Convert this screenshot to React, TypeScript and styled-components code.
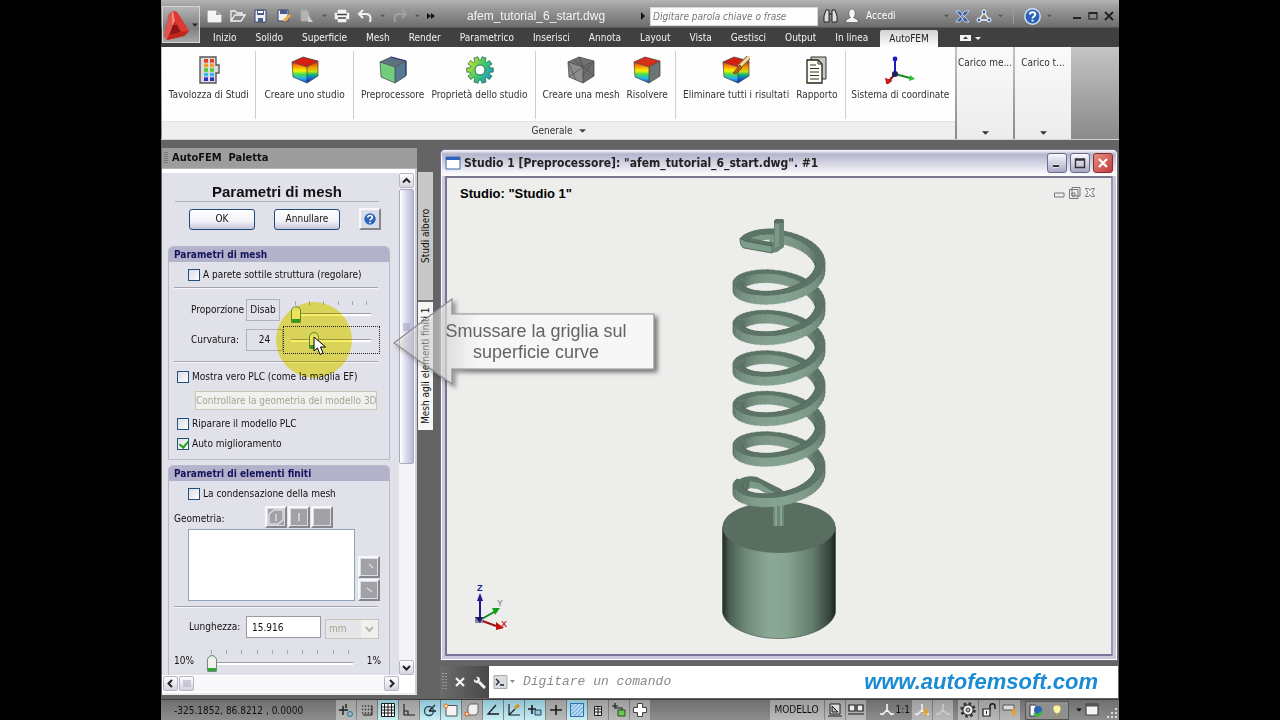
import React from "react";
import styled, { createGlobalStyle, css } from "styled-components";

const ui = `"DejaVu Sans Condensed", "DejaVu Sans", sans-serif`;
const arial = `"Liberation Sans", Arial, sans-serif`;

const Global = createGlobalStyle`
  * { box-sizing: border-box; }
  body { margin: 0; background: #000; font-family: ${ui}; font-size: 10px; line-height: 14px; color: #111; }
  button, input, select { font: inherit; color: inherit; margin: 0; padding: 0; }
  button { background: none; border: 0; }
  svg { display: block; flex: none; }
`;

const Stage = styled.div`
  min-height: 100vh;
  padding: 0 161px;
  overflow: hidden;
  display: flex;
  flex-direction: column;
`;

/* ---------- header ---------- */
const Header = styled.header`
  display: flex;
  height: 47px;
  background: linear-gradient(#b4b4b4, #9a9a9a 8px, #6e6e6e 27px, #404040 28px, #404040);
`;
const LogoButton = styled.button`
  width: 38px;
  height: 37px;
  margin: 6px 0 0 1px;
  display: flex;
  align-items: center;
  gap: 2px;
  border: 1px solid #d5d5d5;
  background: linear-gradient(#b5b5b5, #7f7f7f 60%, #a8a8a8);
`;
const HeaderMain = styled.div`
  flex: 1;
  min-width: 0;
`;
const TitleRow = styled.div`
  display: flex;
  align-items: center;
  height: 28px;
  padding: 4px 4px 0 6px;
`;
const QuickBar = styled.div`
  display: flex;
  align-items: center;
  width: 236px;
  gap: 7px;
  padding-left: 1px;
`;
const ToolButton = styled.button`
  display: flex;
  align-items: center;
`;
const DocName = styled.div`
  width: 173px;
  padding-left: 25px;
  font: 12px/16px ${arial};
  color: #f4f4f4;
  white-space: nowrap;
`;
const Search = styled.input`
  flex: 1;
  min-width: 0;
  height: 19px;
  margin: 0 5px 0 3px;
  padding: 0 2px;
  border: 1px solid #d8d8d8;
  background: #fdfdfd;
  font: italic 10px/17px ${ui};
  &::placeholder { color: #777; opacity: 1; }
`;
const Account = styled.div`
  display: flex;
  align-items: center;
  gap: 7px;
  width: 121px;
  color: #fff;
`;
const HeaderTools = styled.div`
  display: flex;
  align-items: center;
  gap: 6px;
`;
const VLine = styled.span`
  width: 1px;
  height: 16px;
  margin: 0 4px;
  background: #9a9a9a;
`;
const WindowTools = styled.div`
  display: flex;
  gap: 4px;
  margin-left: 19px;
`;
const Tabs = styled.nav`
  display: flex;
  height: 19px;
  padding-left: 4px;
`;
const Tab = styled.button<{ $active?: boolean }>`
  padding: 0 9px;
  margin-right: 1px;
  color: #f2f2f2;
  white-space: nowrap;
  ${(p) =>
    p.$active &&
    css`
      margin-top: 2px;
      margin-left: 2px;
      margin-right: 20px;
      border-radius: 2px 2px 0 0;
      background: linear-gradient(#d2d2d2, #fff);
      color: #222;
    `}
`;

/* ---------- ribbon ---------- */
const Ribbon = styled.section`
  display: flex;
  height: 93px;
  padding-left: 1px;
  background: linear-gradient(#c4c4c4, #8a8a8a);
  border-bottom: 1px solid #d5d5d5;
`;
const RibbonMain = styled.div`
  flex: 1;
  display: flex;
  flex-direction: column;
  background: #fefefe;
`;
const RibbonGroups = styled.div`
  flex: 1;
  display: flex;
  padding: 4px 0 2px;
`;
const RibbonGroup = styled.div<{ $grow: number }>`
  flex: ${(p) => p.$grow} 1 0;
  min-width: 0;
  display: flex;
  justify-content: space-evenly;
  align-items: flex-start;
  & + & { border-left: 1px solid #cfcfcf; }
`;
const RibbonButton = styled.button`
  display: flex;
  flex-direction: column;
  align-items: center;
  gap: 4px;
  padding-top: 5px;
  color: #333;
  white-space: nowrap;
`;
const RibbonTitle = styled.div`
  display: flex;
  justify-content: center;
  align-items: center;
  gap: 6px;
  height: 18px;
  border-top: 1px solid #e4e4e4;
  background: #efefef;
  color: #333;
`;
const SidePanel = styled.button`
  width: 56px;
  margin-left: 2px;
  padding: 9px 0 4px;
  display: flex;
  flex-direction: column;
  justify-content: space-between;
  align-items: center;
  background: linear-gradient(#fafafa, #ececec);
  color: #333;
  white-space: nowrap;
`;
const RibbonTail = styled.div`
  width: 48px;
`;

/* ---------- work area ---------- */
const Work = styled.main`
  position: relative;
  flex: 1;
  display: flex;
  min-height: 540px;
  padding: 8px 1px 0;
  background: #646464;
`;
const Palette = styled.aside`
  width: 255px;
  display: flex;
  flex-direction: column;
  margin-bottom: 4px;
  background: #fff;
  border-bottom: 2px solid #ececec;
  border-right: 2px solid #cdccdc;
`;
const PaletteTitle = styled.div`
  display: flex;
  gap: 4px;
  align-items: center;
  height: 21px;
  padding: 0 2px;
  background: #9d9d9d;
  border-bottom: 1px solid #b4b4b4;
  margin-right: -2px;
  font: bold 11px/14px ${ui};
  white-space: pre;
`;
const PaletteBody = styled.div`
  flex: 1;
  display: flex;
  min-height: 0;
  padding: 4px 1px 0 0;
`;
const Form = styled.form`
  flex: 1;
  min-width: 0;
  height: 502px;
  overflow: hidden;
  padding: 9px 9px 0 6px;
  background: #e1e1ea;
`;
const FormTitle = styled.h1`
  margin: 0 11px 6px 7px;
  border-bottom: 1px solid #b0b0b8;
  text-align: center;
  font: bold 15px/19px ${arial};
`;
const FormButtons = styled.div`
  display: flex;
  align-items: center;
  gap: 19px;
  margin: 0 0 16px 21px;
`;
const XpButton = styled.button`
  width: 66px;
  height: 21px;
  border: 1px solid #1d4c7c;
  border-radius: 3px;
  background: linear-gradient(#fff, #f1f1f8 60%, #c5c4da);
`;
const SquareButton = styled.button`
  display: flex;
  align-items: center;
  justify-content: center;
  width: 22px;
  height: 22px;
  border: 2px solid;
  border-color: #f8f8fb #85858d #85858d #f8f8fb;
  background: #dcdce4;
`;
const Fieldset = styled.section`
  margin-bottom: 5px;
  border: 1px solid #b9b8cc;
  border-radius: 5px 5px 0 0;
`;
const Legend = styled.h2`
  margin: 0;
  height: 15px;
  padding-left: 5px;
  background: #b4b1cb;
  border-radius: 4px 4px 0 0;
  font: bold 10px/15px ${ui};
  color: #14145c;
`;
const Rule = styled.hr`
  height: 2px;
  margin: 0 11px 0 5px;
  border: 0;
  border-top: 1px solid #a4a4ae;
  border-bottom: 1px solid #f6f6fa;
`;
const CheckRow = styled.label<{ $indent?: boolean }>`
  display: flex;
  align-items: center;
  gap: 3px;
  height: ${(p) => (p.$indent ? 25 : 20)}px;
  padding-left: ${(p) => (p.$indent ? 19 : 8)}px;
  white-space: nowrap;
`;
const Check = styled.input`
  appearance: none;
  width: 12px;
  height: 12px;
  border: 1px solid #24507c;
  background: linear-gradient(135deg, #dcdce4, #fff);
  &:checked::after {
    content: "";
    display: block;
    width: 4px;
    height: 7px;
    margin: 0 0 0 3px;
    border: solid #21a121;
    border-width: 0 2px 2px 0;
    transform: rotate(40deg);
  }
`;
const Sliders = styled.div`
  padding: 6px 0;
`;
const SliderRow = styled.div`
  display: flex;
  align-items: center;
  height: 30px;
  padding-left: 22px;
`;
const SliderLabel = styled.label`
  width: 55px;
  white-space: nowrap;
`;
const ValueBox = styled.output<{ $wide?: boolean }>`
  width: ${(p) => (p.$wide ? 37 : 34)}px;
  height: 22px;
  border: 1px solid #b2b1c2;
  text-align: center;
  line-height: 20px;
`;
const SliderCell = styled.div<{ $focus?: boolean }>`
  position: relative;
  width: 97px;
  height: 28px;
  margin-left: ${(p) => (p.$focus ? 0 : 3)}px;
  padding: 4px 8px 0 7px;
  border: 1px dotted ${(p) => (p.$focus ? "#222" : "transparent")};
`;
const Ticks = styled.div`
  display: flex;
  justify-content: space-between;
  height: 4px;
  padding: 0 4px;
  & > i { width: 1px; background: #a5a5ad; }
`;
const Range = styled.input`
  appearance: none;
  display: block;
  width: 100%;
  height: 18px;
  background: linear-gradient(transparent 8px, #9c9ca6 8px, #9c9ca6 9px, #fff 9px, #fff 11px, transparent 11px);
  &::-webkit-slider-thumb {
    appearance: none;
    width: 10px;
    height: 17px;
    border: 1px solid #6f8b74;
    border-radius: 5px 5px 1px 1px;
    background: linear-gradient(#cfe8cf, #f4f4f0 4px, #f0f0ec 12px, #2fa637 12px);
  }
`;
const Highlight = styled.span`
  position: absolute;
  left: -8px;
  top: -25px;
  width: 76px;
  height: 76px;
  border-radius: 50%;
  background: #f8f062;
  mix-blend-mode: multiply;
  pointer-events: none;
`;
const Pointer = styled.svg`
  position: absolute;
  left: 29px;
  top: 9px;
`;
const Checks = styled.div`
  padding: 4px 0 5px;
`;
const WideButton = styled.button`
  display: block;
  width: 182px;
  height: 19px;
  margin: 4px 0 4px 26px;
  border: 1px solid #c9c8b8;
  background: #f0f0ee;
  color: #a5a493;
  white-space: nowrap;
`;
const GeometryRow = styled.div`
  display: flex;
  align-items: flex-end;
  height: 22px;
  padding-left: 5px;
  & > span { width: 91px; line-height: 18px; }
  & > button + button { margin-left: 1px; }
`;
const ListRow = styled.div`
  display: flex;
  align-items: flex-end;
  gap: 3px;
  padding-left: 19px;
  margin: 1px 0 5px;
`;
const ListBox = styled.div`
  width: 167px;
  height: 72px;
  border: 1px solid #8ea4b8;
  background: #fff;
`;
const Stack = styled.div`
  display: flex;
  flex-direction: column;
  gap: 1px;
`;
const LengthRow = styled.div`
  display: flex;
  align-items: center;
  height: 38px;
  padding-left: 20px;
  & > label { width: 57px; }
`;
const TextInput = styled.input`
  width: 75px;
  height: 22px;
  padding: 0 5px;
  border: 1px solid #9a9aa6;
  background: #fff;
`;
const Unit = styled.div`
  position: relative;
  margin: 3px 0 0 4px;
`;
const UnitSelect = styled.select`
  appearance: none;
  display: block;
  width: 54px;
  height: 20px;
  padding: 0 3px;
  border: 1px solid #c6c5bb;
  background: #e6e6e8;
  color: #a5a493;
  opacity: 1;
`;
const UnitArrow = styled.svg`
  position: absolute;
  right: 1px;
  top: 1px;
`;
const PercentRow = styled.div`
  display: flex;
  align-items: center;
  height: 30px;
  padding: 0 8px 0 5px;
  & > label { width: 28px; }
  & > div { flex: 1; padding: 0 14px 0 5px; }
`;

const VScroll = styled.div`
  display: flex;
  flex-direction: column;
  align-items: center;
  width: 15px;
  height: 502px;
  background: #f4f4f8;
`;
const HScroll = styled.div`
  display: flex;
  height: 15px;
  margin: 1px 16px 2px 1px;
  gap: 1px;
  background: #f8f8fb;
  & > button:last-child { margin-left: auto; }
`;
const ScrollButton = styled.button`
  display: flex;
  align-items: center;
  justify-content: center;
  width: 15px;
  height: 15px;
  border: 1px solid #b5b5c6;
  border-radius: 2px;
  background: linear-gradient(#fff, #d4d4e2);
`;
const ScrollThumb = styled.div`
  display: flex;
  align-items: center;
  justify-content: center;
  width: 15px;
  height: 275px;
  margin: 1px 0 auto;
  border: 1px solid #a9a9c4;
  border-radius: 2px;
  background: linear-gradient(90deg, #fff, #d8d8ec 50%, #b9b9d6);
`;
const SideTabs = styled.div`
  display: flex;
  flex-direction: column;
  width: 16px;
  padding-top: 23px;
`;
const SideTab = styled.button<{ $active?: boolean }>`
  height: 130px;
  width: 16px;
  border: 1px solid #666;
  border-left: 0;
  background: ${(p) => (p.$active ? "#f6f6f6" : "#c8c8c8")};
  writing-mode: vertical-rl;
  transform: rotate(180deg);
  white-space: nowrap;
  line-height: 14px;
`;

/* ---------- document window ---------- */
const DocColumn = styled.div`
  flex: 1;
  min-width: 0;
  display: flex;
  flex-direction: column;
  margin-left: 7px;
  padding-top: 1px;
`;
const DocWindow = styled.section`
  flex: 1;
  display: flex;
  flex-direction: column;
  padding: 0 4px 4px;
  border: 1px solid #6e6c8c;
  border-radius: 5px 5px 0 0;
  background: #cbcadc;
  box-shadow: inset 0 0 0 1px #fff;
`;
const DocTitle = styled.div`
  display: flex;
  align-items: center;
  gap: 3px;
  height: 26px;
  margin: 0 -3px;
  padding: 0 3px;
  border-radius: 4px 4px 0 0;
  background: linear-gradient(#fff, #b4b4cc 4px, #cfcfdf 12px, #f2f2f8 22px, #fff);
  font: bold 12px/14px ${ui};
  color: #222;
  & > span { flex: 1; white-space: nowrap; }
`;
const CaptionButton = styled.button<{ $close?: boolean }>`
  display: flex;
  align-items: center;
  justify-content: center;
  width: 20px;
  height: 20px;
  border: 1px solid ${(p) => (p.$close ? "#8a2a2a" : "#6b6b8c")};
  border-radius: 3px;
  background: ${(p) => (p.$close ? "linear-gradient(135deg, #e58f84, #c23a3a)" : "linear-gradient(#fafaff, #a9a9c6)")};
`;
const Canvas = styled.div`
  position: relative;
  flex: 1;
  border: 2px solid #777;
  border-color: #77778a #9a9ab4 #77779a #77778a;
  background: #ededec;
`;
const StudioName = styled.div`
  padding: 8px 13px;
  font: bold 13px/16px ${arial};
  color: #000;
`;
const ViewTools = styled.svg`
  position: absolute;
  right: 15px;
  top: 8px;
`;
const Model = styled.svg`
  position: absolute;
  left: calc(50% - 64px);
  top: 32px;
`;
const Axes = styled.svg`
  position: absolute;
  left: 23px;
  bottom: 21px;
`;
const CommandBar = styled.div`
  display: flex;
  align-items: center;
  height: 32px;
  margin: 5px 0 1px;
  background: #fff;
`;
const CommandHandle = styled.div`
  display: flex;
  align-items: center;
  gap: 8px;
  width: 49px;
  height: 32px;
  padding-left: 2px;
  background: linear-gradient(90deg, #6c6c6c, #484848);
`;
const CommandInput = styled.input`
  flex: 1;
  min-width: 0;
  margin-left: 8px;
  border: 0;
  background: none;
  font: italic 13px/16px "Liberation Mono", monospace;
  &::placeholder { color: #8a8a8a; opacity: 1; }
`;
const SiteLink = styled.a`
  margin-right: 20px;
  font: italic bold 22px/28px ${arial};
  color: #1b8bd6;
  text-decoration: none;
`;

const Callout = styled.div`
  position: absolute;
  left: 229px;
  top: 155px;
  width: 274px;
  height: 98px;
`;
const CalloutText = styled.p`
  position: absolute;
  left: 53px;
  top: 26px;
  width: 186px;
  margin: 0;
  font: 18px/21px ${arial};
  color: #636363;
  text-align: center;
  white-space: nowrap;
`;

/* ---------- status bar ---------- */
const Status = styled.footer`
  display: flex;
  align-items: stretch;
  height: 21px;
  padding-left: 1px;
  border-top: 1px solid #3c3c3c;
  background: linear-gradient(#6f6f6f, #8d8d8d);
`;
const Coordinates = styled.div`
  width: 174px;
  padding-left: 12px;
  line-height: 22px;
  color: #111;
`;
const StatusButton = styled.button<{ $on?: boolean; $flat?: boolean; $gap?: boolean }>`
  display: flex;
  align-items: center;
  justify-content: center;
  width: 20px;
  margin-right: 1px;
  margin-left: ${(p) => (p.$gap ? 4 : 0)}px;
  background: ${(p) => (p.$flat ? "none" : p.$on ? "linear-gradient(#8ec3d2, #c9eef4)" : "linear-gradient(#9d9d9d, #b9b9b9)")};
`;
const Spacer = styled.div`
  flex: 1;
`;
const ModelButton = styled.button`
  width: 54px;
  margin-right: 1px;
  background: linear-gradient(#9d9d9d, #b9b9b9);
`;
const ScaleButton = styled.button`
  display: flex;
  align-items: center;
  gap: 1px;
  margin-left: 10px;
  padding: 0 2px;
`;
const Tray = styled.div`
  display: flex;
  margin: 1px 7px 0 4px;
  border: 1px solid #555;
  background: #8f8f8f;
`;

/* ---------- icons ---------- */
const Caret = ({ c = "#333", w = 7 }: { c?: string; w?: number }) => (
  <svg width={w} height="4" viewBox="0 0 8 4" aria-hidden="true"><path d="M0 0H8L4 4Z" fill={c} /></svg>
);

type Faces = { top: string; left: string; right: string };
const Cube = ({ top, left, right, children }: Faces & { children?: React.ReactNode }) => (
  <svg width="28" height="28" viewBox="0 0 28 28" aria-hidden="true">
    <defs>
      <linearGradient id="heat" x1="0" y1="0" x2="0" y2="1">
        <stop offset="0" stopColor="#f02a10" /><stop offset=".28" stopColor="#ffb400" />
        <stop offset=".42" stopColor="#f4f400" /><stop offset=".58" stopColor="#48dc48" />
        <stop offset=".78" stopColor="#22b4f0" /><stop offset="1" stopColor="#1840d0" />
      </linearGradient>
      <linearGradient id="heatR" x1="0" y1="0" x2="0" y2="1">
        <stop offset="0" stopColor="#d81808" /><stop offset=".3" stopColor="#f0a000" />
        <stop offset=".48" stopColor="#c8e010" /><stop offset=".62" stopColor="#10b870" />
        <stop offset=".8" stopColor="#1060e0" /><stop offset="1" stopColor="#1020a0" />
      </linearGradient>
    </defs>
    <path d="M1 6L12 1 27 5 16 11Z" fill={top} />
    <path d="M1 6L16 11V27L2 21Z" fill={left} />
    <path d="M16 11L27 5V20L16 27Z" fill={right} />
    <path d="M1 6L12 1 27 5V20L16 27 2 21ZM1 6L16 11 27 5M16 11V27" fill="none" stroke="#3c3c3c" strokeWidth=".7" strokeLinejoin="round" />
    {children}
  </svg>
);

const PaletteIcon = () => (
  <svg width="28" height="28" viewBox="0 0 28 28" aria-hidden="true">
    <path d="M5 1H21V9H24V17H21V27H5Z" fill="#dcdce0" stroke="#555" strokeWidth="1.4" />
    {["#e03a20", "#f0a020", "#58c838", "#38b8e8", "#3030c0"].map((c, i) => (
      <g key={c} fill={c}><rect x="9" y={3 + i * 4.6} width="4" height="3.6" /><rect x="15" y={3 + i * 4.6} width="4" height="3.6" /></g>
    ))}
  </svg>
);
const GearIcon = () => {
  const pts: string[] = [];
  for (let i = 0; i < 10; i++) {
    const a = (i * Math.PI) / 5;
    [[-0.22, 10], [-0.16, 13.4], [0.16, 13.4], [0.22, 10]].forEach(([d, r]) => {
      pts.push(`${(14 + r * Math.cos(a + d)).toFixed(1)} ${(14 + r * Math.sin(a + d)).toFixed(1)}`);
    });
  }
  return (
    <svg width="28" height="28" viewBox="0 0 28 28" aria-hidden="true">
      <defs><linearGradient id="gear" x1="0" y1=".2" x2="1" y2=".8"><stop offset="0" stopColor="#f0e020" /><stop offset=".45" stopColor="#48cc60" /><stop offset="1" stopColor="#1494d8" /></linearGradient></defs>
      <path d={`M${pts.join("L")}Z`} fill="url(#gear)" stroke="#2b7a55" strokeWidth=".9" strokeLinejoin="round" />
      <circle cx="14" cy="14" r="5" fill="#fff" stroke="#2b7a55" />
    </svg>
  );
};
const ReportIcon = () => (
  <svg width="28" height="28" viewBox="0 0 28 28" aria-hidden="true">
    <path d="M8 1H23V23H8Z" fill="#c8c8c0" stroke="#333" />
    <path d="M4 4H15L19 8V27H4Z" fill="#fffef0" stroke="#222" strokeWidth="1.3" />
    <path d="M15 4V8H19M7 9H13M7 12.500H16M7 16H16M7 19.500H16M7 23H16" fill="none" stroke="#333" />
  </svg>
);
const CoordIcon = () => (
  <svg width="30" height="28" viewBox="0 0 30 28" aria-hidden="true">
    <path d="M10 2V18" stroke="#2018c0" strokeWidth="2" /><circle cx="10" cy="3" r="2.400" fill="#2018c0" />
    <path d="M10 18L27 22.500" stroke="#208828" strokeWidth="2" /><path d="M25 19L30 23 24 25Z" fill="#28c038" />
    <path d="M10 18L3 26" stroke="#901818" strokeWidth="2" /><path d="M1 23L6 25 2 28Z" fill="#e02020" stroke="#c01818" strokeWidth="1.500" />
    <circle cx="10" cy="18" r="3" fill="#202060" />
  </svg>
);
const Lines = ({ d, w = 16, h = 14, c = "#f2f2f2", fill = "none", sw = 1.5, children }: { d: string; w?: number; h?: number; c?: string; fill?: string; sw?: number; children?: React.ReactNode }) => (
  <svg width={w} height={h} viewBox={`0 0 ${w} ${h}`} aria-hidden="true">
    <path d={d} fill={fill} stroke={c} strokeWidth={sw} />
    {children}
  </svg>
);
const HelpBall = ({ size = 15 }: { size?: number }) => (
  <svg width={size} height={size} viewBox="0 0 16 16" aria-hidden="true">
    <circle cx="8" cy="8" r="7.200" fill="#2c62b8" stroke="#cfe0f6" strokeWidth="1.400" />
    <path d="M5.500 6.200C5.500 3.200 10.600 3.200 10.600 6.200 10.600 8 8 8 8 9.800M8 11V12.800" fill="none" stroke="#fff" strokeWidth="1.900" />
  </svg>
);

/* ---------- spring model ---------- */
type Face = { pts: string; fill: string; depth: number };
const shade = (k: number) => {
  const base = [136, 166, 148];
  return `rgb(${base.map((v) => Math.round(v * k)).join(",")})`;
};
const buildSpring = (): Face[] => {
  const faces: Face[] = [];
  const cx = 64;
  const rOut = 46;
  const rIn = 37;
  const tilt = 0.48;
  const pitch = 40.5;
  const height = 9;
  const left = 77;
  const steps = 48;
  const at = (t: number, r: number, dy: number) => {
    const a = t * Math.PI * 2;
    return `${(cx - r * Math.cos(a)).toFixed(1)},${(left + pitch * t - r * tilt * Math.sin(a) + dy).toFixed(1)}`;
  };
  for (let i = Math.round(-0.8 * steps); i < 5.06 * steps; i++) {
    const t0 = i / steps;
    const t1 = (i + 1.15) / steps;
    const a = (t0 + 0.5 / steps) * Math.PI * 2;
    const front = -Math.sin(a);
    const depth = front * 40 - pitch * t0 * 0.5;
    const h = height / 2;
    const light = 0.46 + 0.52 * Math.sqrt(Math.abs(Math.sin(a)));
    faces.push({ pts: [at(t0, rIn, h), at(t1, rIn, h), at(t1, rIn, -h), at(t0, rIn, -h)].join(" "), fill: shade(front < 0 ? light * 0.95 : 0.5), depth });
    if (front > -0.12) {
      faces.push({ pts: [at(t0, rOut, h), at(t1, rOut, h), at(t1, rOut, -h), at(t0, rOut, -h)].join(" "), fill: shade(light), depth: depth + 0.01 });
    }
    faces.push({ pts: [at(t0, rOut, -h), at(t1, rOut, -h), at(t1, rIn, -h), at(t0, rIn, -h)].join(" "), fill: "#5b7465", depth: depth + 0.02 });
  }
  return faces.sort((p, q) => p.depth - q.depth);
};
const spring = buildSpring();

const SpringModel = () => (
  <Model width="128" height="432" viewBox="0 0 128 432" role="img" aria-label="Molla con cilindro">
    <defs>
      <linearGradient id="cyl"><stop offset="0" stopColor="#1f2a24" /><stop offset=".06" stopColor="#4a5e52" /><stop offset=".22" stopColor="#728c7c" /><stop offset=".42" stopColor="#8ba996" /><stop offset=".58" stopColor="#86a391" /><stop offset=".8" stopColor="#637b6c" /><stop offset=".95" stopColor="#34443a" /><stop offset="1" stopColor="#1b241f" /></linearGradient>
    </defs>
    <path d="M7.500 317V402C9 415 32 428.500 64 428.500S119 415 120.500 402V317Z" fill="url(#cyl)" stroke="#3c4d43" strokeWidth=".6" />
    <ellipse cx="64" cy="317" rx="56.500" ry="26" fill="#596e61" />
    <path d="M58 288H69V316H58Z" fill="#6d8777" /><path d="M60 288H62V316H60ZM65 288H67V316H65Z" fill="#87a392" />
    <path d="M18 278C20 269 32 264 42 267L66 279C70 282 70 288 68 293L56 293 56 286 45 280C38 276 34 277 30 283Z" fill="#5b7465" />
    <path d="M35 271L44 273 60 283C62 286 61 291 58 292L55 285 43 279 34 278Z" fill="#7d9a89" />
    {spring.map((f, i) => <polygon key={i} points={f.pts} fill={f.fill} stroke={f.fill} strokeWidth=".3" />)}
    <path d="M62 19C46 17 28 22 25 29L31 33 37 28C43 25 52 24 62 25Z" fill="#5b7465" />
    <path d="M35 29C40 25 50 24 60 25V29L40 31Z" fill="#7d9a89" />
    <path d="M27 27L35 28 61 33 57 37 30 32Z" fill="#5b7465" />
    <path d="M25 28L30 31 57 36V43L29 38C26 37 25 33 25 28Z" fill="#7f9d8b" stroke="#42554a" strokeWidth=".8" />
    <path d="M57 36L59 33V11L61 9H68L69 11V37L62 42 57 43Z" fill="#6b8575" />
    <path d="M59 11L61 9H68L69 11V13H59Z" fill="#587062" /><path d="M60 14H64V36L60 38Z" fill="#7d9989" />
  </Model>
);

/* ---------- data ---------- */
const tabs = ["Inizio", "Solido", "Superficie", "Mesh", "Render", "Parametrico", "Inserisci", "Annota", "Layout", "Vista", "Gestisci", "Output", "In linea", "AutoFEM"];

const brush = (
  <>
    <path d="M27 1L17 11" stroke="#8a6a30" strokeWidth="5" /><path d="M27 1L17 11" stroke="#f0dca0" strokeWidth="3" />
    <path d="M18 9L20 12 14 18 11 17Z" fill="#b86018" stroke="#6a3008" strokeWidth=".7" />
  </>
);
const meshLines = <path d="M2 21L16 11M1 6L9 24M16 11L27 20M16 19L27 5M7 4L16 11M12 1L16 11" stroke="#4a4a4a" strokeWidth=".7" />;
const groups: { grow: number; items: [string, React.ReactNode][] }[] = [
  { grow: 94, items: [["Tavolozza di Studi", <PaletteIcon />]] },
  { grow: 97, items: [["Creare uno studio", <Cube top="#d42010" left="url(#heat)" right="url(#heatR)" />]] },
  { grow: 182, items: [["Preprocessore", <Cube top="#5d7280" left="#74cc80" right="#567890"><path d="M12 1L27 5V19" fill="none" stroke="#20308c" /></Cube>], ["Proprietà dello studio", <GearIcon />]] },
  { grow: 140, items: [["Creare una mesh", <Cube top="#707070" left="#8c8c8c" right="#6c6c6c">{meshLines}</Cube>], ["Risolvere", <Cube top="#d83018" left="url(#heat)" right="#6c7478" />]] },
  { grow: 170, items: [["Eliminare tutti i risultati", <Cube top="#d42010" left="url(#heat)" right="url(#heatR)">{brush}</Cube>], ["Rapporto", <ReportIcon />]] },
  { grow: 110, items: [["Sistema di coordinate", <CoordIcon />]] },
];

const k = "#1c1c1c";
const statusIcons: [string, boolean, React.ReactNode][] = [
  ["Deduci vincoli", false, <Lines c={k} sw={1.4} d="M1 7H10M5 3V12M8 1V5"><circle cx="12" cy="11" r="2.500" fill="none" stroke="#1878a8" /></Lines>],
  ["Snap", false, <Lines c="#333" sw={1.4} d="M3 3H13M3 6.500H13M3 10H13" ><path d="M5 2V12M8 2V12M11 2V12" stroke="#aaa" strokeWidth="1.600" /><path d="M13 3V12M4 12H13" stroke={k} /></Lines>],
  ["Griglia", true, <Lines c={k} sw={1} fill="#fff" d="M1.500.500H14.500V13.500H1.500ZM4.500.500V13.500M8 .500V13.500M11.500.500V13.500M1.500 4H14.500M1.500 7H14.500M1.500 10H14.500" />],
  ["Orto", false, <Lines c={k} d="M3 1V12H14M3 8H7V12" sw={1.1} />],
  ["Polare", true, <Lines c={k} d="M7 8L13 2M7 8H14" sw={1.3}><circle cx="7" cy="8" r="4.500" fill="none" stroke="#245" strokeWidth="1.300" /></Lines>],
  ["Snap oggetto", true, <Lines c="#555" fill="#f4f4f4" d="M3 2.500H14V13H3Z" sw={1}><circle cx="3" cy="3" r="2" fill="#ffe0b0" stroke="#e07020" /></Lines>],
  ["Snap 3D", false, <Lines c="#666" fill="#f0f0f0" d="M4 4L6 1H14V9L12 12H4Z" sw={1}><circle cx="3" cy="11" r="2" fill="#ffe0b0" stroke="#d05020" /></Lines>],
  ["Puntamento", true, <Lines c={k} d="M11 2L3 11H14" sw={1.3} />],
  ["UCS dinamico", true, <Lines c={k} d="M3 1V12H14M3 12L9 6" sw={1.2}><path d="M9 5L13 2" stroke="#d89020" strokeWidth="3" /></Lines>],
  ["Input dinamico", true, <Lines c={k} d="M1 6H9M5 2V11" sw={1.6}><path d="M8 7H14V12H8Z" fill="#9cc" stroke="#246" /></Lines>],
  ["Spessore", false, <Lines c={k} d="M2 7H14M8 2V12" sw={1.6} />],
  ["Trasparenza", true, <Lines c="#2a6ca8" fill="#bfe0f8" d="M1.500.500H14.500V13.500H1.500Z" sw={1}><path d="M2 4L5 1M2 8L9 1M2 12L13 1M5 13L14 4M9 13L14 8" stroke="#7ab0dc" strokeWidth="1.200" /></Lines>],
  ["Proprietà", false, <Lines c={k} fill="#eee" d="M4.500 3.500H11.500V12.500H4.500ZM4.500 6H11.500M4.500 9H11.500M8 3V12" sw={1} />],
  ["Ciclo selezione", false, <Lines c={k} d="M1 3H7M4 0V6M5 5H11V8" sw={1.2}><path d="M7 7H14V13H7Z" fill="#6cc850" stroke="#285018" /></Lines>],
  ["Monitor", false, <Lines c="#444" fill="#fff" d="M5.500.500H10.500V4.500H14.500V9.500H10.500V13.500H5.500V9.500H1.500V4.500H5.500Z" sw={1} />],
];
const bolt = <path d="M12 5L10 9H13L11 13" fill="none" stroke="#e8a020" strokeWidth="1.800" />;
const person = "M8 1V7M8 7L3 12M8 7L13 12M5 11H1M11 11H15";

const quick: [string, React.ReactNode][] = [
  ["Nuovo", <Lines fill="#f4f4f4" d="M1 2H9L14 6V13H1Z" sw={0.8}><path d="M9 2V6H14" fill="#999" /></Lines>],
  ["Apri", <Lines d="M1 12V2H5L7 4H12V6M1 12L5 6H15L11 12Z" sw={1.3} />],
  ["Salva", <Lines fill="#f0f0f0" c="#34466c" d="M2 1H13V13H2Z" sw={1}><path d="M4 1H11V6H4ZM5 9H10V13H5Z" fill="#455c90" /><path d="M5 2H10V4H5Z" fill="#fff" /></Lines>],
  ["Salva con nome", <Lines fill="#f0f0f0" c="#34466c" d="M2 1H12V12H2Z" sw={1}><path d="M4 1H11V5H4Z" fill="#455c90" /><path d="M14 6L8 12" stroke="#e8b040" strokeWidth="3" /></Lines>],
  ["Proprietà foglio", <Lines fill="#b4b4b4" c="#a4a4a4" d="M2 1H8L10 4V12H2Z" sw={1}><path d="M9 6L14 13H9Z" fill="#d0d0d0" /></Lines>],
];

const CheckLine = ({ label, indent, checked }: { label: string; indent?: boolean; checked?: boolean }) => (
  <CheckRow $indent={indent}><Check type="checkbox" defaultChecked={checked} />{label}</CheckRow>
);
const TickMarks = ({ n }: { n: number }) => <Ticks>{Array.from({ length: n }, (_, i) => <i key={i} />)}</Ticks>;
const grey = (d?: string) => <svg width="16" height="16" viewBox="0 0 16 16" aria-hidden="true"><path d="M0 0H16V16H0Z" fill="#a2a2a6" />{d && <path d={d} fill="none" stroke="#dcdce0" strokeWidth="1.500" />}</svg>;
const chevron = (d: string) => <svg width="9" height="9" viewBox="0 0 9 9" aria-hidden="true"><path d={d} fill="none" stroke="#222" strokeWidth="2" /></svg>;

export default function App() {
  return (
    <>
      <Global />
      <Stage>
        <Header>
          <LogoButton aria-label="Menu applicazione">
            <svg width="27" height="32" viewBox="0 0 27 32" aria-hidden="true">
              <path d="M6 5L10 2 14 3 26 22 21 27 4 31 1 27Z" fill="#cf2a24" />
              <path d="M6 5L10 2 11 14 4 31 1 27Z" fill="#e0564c" /><path d="M10 2L14 3 26 22 21 27 13 14Z" fill="#dc3a32" />
              <path d="M10 16L14 16 18 24 6 27Z" fill="#8e1512" />
              <path d="M4 31L6 26 17 23 26 22 21 27Z" fill="#c22520" /><path d="M9 3L10 2 12 12 9 16Z" fill="#f28a80" />
            </svg>
            <Caret c="#222" w={6} />
          </LogoButton>
          <HeaderMain>
            <TitleRow>
              <QuickBar>
                {quick.map(([name, icon]) => <ToolButton key={name} aria-label={name}>{icon}</ToolButton>)}
                <Caret c="#555" w={5} />
                <ToolButton aria-label="Stampa"><Lines fill="#f4f4f4" d="M4 1H12V4H15V10H12V13H4V10H1V4H4Z" sw={0.6}><path d="M3 5.500H13M4 9H12" stroke="#444" strokeWidth="1.500" /></Lines></ToolButton>
                <ToolButton aria-label="Annulla"><Lines d="M6 1L2 5L6 9M2 5H9C14 5 14 9 13 13" sw={2} /></ToolButton>
                <Caret c="#555" w={5} />
                <ToolButton aria-label="Ripeti"><Lines c="#a2a2a2" d="M10 1L14 5L10 9M14 5H7C2 5 2 9 3 13" sw={2} /></ToolButton>
                <Caret c="#555" w={5} />
                <ToolButton aria-label="Altro"><Lines w={8} h={6} c="none" fill="#111" d="M0 0L4 3L0 6ZM4 0L8 3L4 6Z" /></ToolButton>
              </QuickBar>
              <DocName>afem_tutorial_6_start.dwg</DocName>
              <Lines w={32} h={8} c="none" fill="#111" d="M26 0L30 4L26 8Z" />
              <Search aria-label="Cerca" placeholder="Digitare parola chiave o frase" />
              <Account>
                <ToolButton aria-label="Cerca ora"><Lines fill="#ddd" c="#222" d="M3 1H6V13H1V7ZM9 1H12L14 7V13H9ZM6 5H9" w={15} sw={1} /></ToolButton>
                <ToolButton aria-label="Utente"><svg width="14" height="14" viewBox="0 0 14 14" aria-hidden="true"><path d="M7 0C11 0 11 7 8.500 8.500L13 11V13.500H1V11L5.500 8.500C3 7 3 0 7 0Z" fill="#f4f4f4" stroke="#444" strokeWidth=".6" /></svg></ToolButton>
                Accedi
              </Account>
              <HeaderTools>
                <Caret c="#555" w={5} />
                <ToolButton aria-label="Exchange"><svg width="15" height="13" viewBox="0 0 15 13" aria-hidden="true"><path d="M1 1H5L14 12H10ZM14 1H10L1 12H5Z" fill="#2c58a8" stroke="#dde8f8" strokeWidth=".8" /></svg></ToolButton>
                <ToolButton aria-label="Rete"><Lines d="M8 3L3 11H13Z" sw={1.4}><g fill="#2c62b8" stroke="#fff"><circle cx="8" cy="3" r="2" /><circle cx="3" cy="11" r="2" /><circle cx="13" cy="11" r="2" /></g></Lines></ToolButton>
                <Caret c="#555" w={5} />
                <VLine />
                <ToolButton aria-label="Guida"><HelpBall size={17} /></ToolButton>
                <Caret c="#555" w={5} />
              </HeaderTools>
              <WindowTools>
                <ToolButton aria-label="Riduci"><Lines w={12} h={12} c="#222" d="M2 8H10" sw={2} /></ToolButton>
                <ToolButton aria-label="Ingrandisci"><Lines w={12} h={12} c="#222" d="M2 2.500H10V9H2ZM2 3.500H10" sw={1.2} /></ToolButton>
                <ToolButton aria-label="Chiudi"><Lines w={12} h={12} c="#222" d="M2 2L10 10M10 2L2 10" sw={2} /></ToolButton>
              </WindowTools>
            </TitleRow>
            <Tabs>
              {tabs.map((t) => <Tab key={t} $active={t === "AutoFEM"}>{t}</Tab>)}
              <ToolButton aria-label="Riduci barra"><Lines w={24} h={10} c="none" fill="#f4f4f4" d="M2 2H13V8H2Z"><path d="M5 6L7.500 3.500L10 6Z" fill="#333" /><path d="M17 4H23L20 7Z" fill="#f4f4f4" /></Lines></ToolButton>
            </Tabs>
          </HeaderMain>
        </Header>

        <Ribbon>
          <RibbonMain>
            <RibbonGroups>
              {groups.map((g) => (
                <RibbonGroup key={g.grow} $grow={g.grow}>
                  {g.items.map(([label, icon]) => <RibbonButton key={label}>{icon}{label}</RibbonButton>)}
                </RibbonGroup>
              ))}
            </RibbonGroups>
            <RibbonTitle>Generale <Caret c="#444" /></RibbonTitle>
          </RibbonMain>
          <SidePanel>Carico me...<Caret /></SidePanel>
          <SidePanel>Carico t...<Caret /></SidePanel>
          <RibbonTail />
        </Ribbon>

        <Work>
          <Palette>
            <PaletteTitle>
              <svg width="4" height="12" viewBox="0 0 4 12" aria-hidden="true"><path d="M1 0V12M3 0V12" stroke="#555" strokeDasharray="1 1" /></svg>
              {"AutoFEM  Paletta"}
            </PaletteTitle>
            <PaletteBody>
              <Form onSubmit={(e) => e.preventDefault()}>
                <FormTitle>Parametri di mesh</FormTitle>
                <FormButtons>
                  <XpButton>OK</XpButton>
                  <XpButton>Annullare</XpButton>
                  <SquareButton aria-label="Guida"><HelpBall size={14} /></SquareButton>
                </FormButtons>
                <Fieldset>
                  <Legend>Parametri di mesh</Legend>
                  <CheckLine indent label="A parete sottile struttura (regolare)" />
                  <Rule />
                  <Sliders>
                    <SliderRow>
                      <SliderLabel htmlFor="prop">Proporzione</SliderLabel>
                      <ValueBox>Disab</ValueBox>
                      <SliderCell>
                        <TickMarks n={6} />
                        <Range id="prop" type="range" min="0" max="10" defaultValue="0" />
                      </SliderCell>
                    </SliderRow>
                    <SliderRow>
                      <SliderLabel htmlFor="curv">Curvatura:</SliderLabel>
                      <ValueBox $wide>24</ValueBox>
                      <SliderCell $focus>
                        <Range id="curv" type="range" min="0" max="100" defaultValue="26" />
                        <Highlight />
                        <Pointer width="14" height="20" viewBox="0 0 14 20" aria-hidden="true"><path d="M1 1V15L4.500 12 7 18.500 10 17 7.500 11H12.500Z" fill="#fff" stroke="#000" /></Pointer>
                      </SliderCell>
                    </SliderRow>
                  </Sliders>
                  <Rule />
                  <Checks>
                    <CheckLine label="Mostra vero PLC (come la maglia EF)" />
                    <WideButton disabled>Controllare la geometria del modello 3D</WideButton>
                    <CheckLine label="Riparare il modello PLC" />
                    <CheckLine checked label="Auto miglioramento" />
                  </Checks>
                </Fieldset>
                <Fieldset>
                  <Legend>Parametri di elementi finiti</Legend>
                  <CheckLine indent label="La condensazione della mesh" />
                  <GeometryRow>
                    <span>Geometria:</span>
                    <SquareButton aria-label="Solido">{grey("M1 5L6 1H15V11L10 15H1ZM8 5V12")}</SquareButton>
                    <SquareButton aria-label="Faccia">{grey("M8 4V12")}</SquareButton>
                    <SquareButton aria-label="Spigolo">{grey()}</SquareButton>
                  </GeometryRow>
                  <ListRow>
                    <ListBox role="listbox" aria-label="Geometria" />
                    <Stack>
                      <SquareButton aria-label="Aggiungi">{grey("M8 5L12 9")}</SquareButton>
                      <SquareButton aria-label="Rimuovi">{grey("M6 6L11 10")}</SquareButton>
                    </Stack>
                  </ListRow>
                  <Rule />
                  <LengthRow>
                    <label htmlFor="len">Lunghezza:</label>
                    <TextInput id="len" defaultValue="15.916" />
                    <Unit>
                      <UnitSelect disabled aria-label="Unità"><option>mm</option></UnitSelect>
                      <UnitArrow width="17" height="18" viewBox="0 0 17 18" aria-hidden="true"><path d="M0 0H17V18H0Z" fill="#f0f0ee" /><path d="M5 7L8.500 11L12 7" fill="none" stroke="#b9b8a8" strokeWidth="2" /></UnitArrow>
                    </Unit>
                  </LengthRow>
                  <PercentRow>
                    <label htmlFor="pct">10%</label>
                    <div><TickMarks n={10} /><Range id="pct" type="range" min="0" max="10" defaultValue="0" /></div>
                    1%
                  </PercentRow>
                </Fieldset>
              </Form>
              <VScroll>
                <ScrollButton aria-label="Su">{chevron("M1 6.500L4.500 3L8 6.500")}</ScrollButton>
                <ScrollThumb><svg width="7" height="8" viewBox="0 0 7 8" aria-hidden="true"><path d="M0 1H7M0 3H7M0 5H7M0 7H7" stroke="#9a9ac0" /></svg></ScrollThumb>
                <ScrollButton aria-label="Giù">{chevron("M1 3L4.500 6.500L8 3")}</ScrollButton>
              </VScroll>
            </PaletteBody>
            <HScroll>
              <ScrollButton aria-label="Sinistra">{chevron("M6 1L2.500 4.500L6 8")}</ScrollButton>
              <ScrollButton aria-label="Scorri"><svg width="8" height="7" viewBox="0 0 8 7" aria-hidden="true"><path d="M1 0V7M3 0V7M5 0V7M7 0V7" stroke="#a5a5b8" /></svg></ScrollButton>
              <ScrollButton aria-label="Destra">{chevron("M3 1L6.500 4.500L3 8")}</ScrollButton>
            </HScroll>
          </Palette>
          <SideTabs>
            <SideTab>Studi albero</SideTab>
            <SideTab $active>Mesh agli elementi finiti 1</SideTab>
          </SideTabs>

          <DocColumn>
            <DocWindow>
              <DocTitle>
                <svg width="16" height="14" viewBox="0 0 16 14" aria-hidden="true"><path d="M1 1H15V13H1Z" fill="#fff" stroke="#3868a8" /><path d="M1 1H15V4H1Z" fill="#2f62c0" /></svg>
                <span>Studio 1 [Preprocessore]: "afem_tutorial_6_start.dwg". #1</span>
                <CaptionButton aria-label="Riduci finestra"><Lines w={12} h={12} c="#fff" d="M2 9H8" sw={3}><path d="M2 9H8" stroke="#333" strokeWidth="2" /></Lines></CaptionButton>
                <CaptionButton aria-label="Ingrandisci finestra"><Lines w={12} h={12} c="#333" d="M1.500 2H10.500V10.500H1.500ZM1.500 3H10.500" sw={1.4} /></CaptionButton>
                <CaptionButton $close aria-label="Chiudi finestra"><Lines w={12} h={12} c="#fff" d="M2 2L10 10M10 2L2 10" sw={2.2} /></CaptionButton>
              </DocTitle>
              <Canvas>
                <StudioName>Studio: "Studio 1"</StudioName>
                <ViewTools width="44" height="14" viewBox="0 0 44 14" aria-hidden="true"><path d="M2.500 7H12V11H2.500ZM20 1.500H28V10H20ZM17.500 3.500H26V12.500H17.500ZM20 7H23V10H20Z" fill="#ededec" stroke="#777" /><path d="M33.500 2.500H36.500L38 4.500 39.500 2.500H42.500L40 6.500 42.500 10.500H39.500L38 8.500 36.500 10.500H33.500L36 6.500Z" fill="#fff" stroke="#777" /></ViewTools>
                <SpringModel />
                <Axes width="44" height="50" viewBox="0 0 44 50" aria-label="Assi X Y Z">
                  <path d="M10 37V16" stroke="#1c1890" strokeWidth="2" /><path d="M7 18L10 10 13 18Z" fill="#1c1890" />
                  <path d="M10 37L24 29" stroke="#108818" strokeWidth="2" /><path d="M22 25L30 25 25 32Z" fill="#10a018" />
                  <path d="M10 37L26 43" stroke="#a01010" strokeWidth="2" /><path d="M26 39L34 45 26 47Z" fill="#c01010" />
                  <path d="M5 34H13V40H5Z" fill="#8c8ca0" /><path d="M5 34H13L10 40Z" fill="#1c1870" />
                  <g fontFamily="Liberation Sans" fontSize="9" fontWeight="bold"><text x="7" y="8" fill="#1c1890">Z</text><text x="27" y="23" fill="#9a9a9a">Y</text><text x="31" y="44" fill="#d02020">X</text></g>
                </Axes>
              </Canvas>
            </DocWindow>
            <CommandBar>
              <CommandHandle>
                <svg width="5" height="18" viewBox="0 0 5 18" aria-hidden="true"><path d="M1 0V18M4 0V18" stroke="#ccc" strokeDasharray="1 2" /></svg>
                <ToolButton aria-label="Chiudi riga di comando"><Lines w={10} h={10} d="M1 1L9 9M9 1L1 9" sw={2.2} /></ToolButton>
                <ToolButton aria-label="Personalizza"><Lines w={13} h={13} d="M6 6L12 12" sw={3}><path d="M1 3L3 5L5 3L3 1C7 0 8 4 6 6.500C4 8 0 7 1 3Z" fill="#f2f2f2" /></Lines></ToolButton>
              </CommandHandle>
              <ToolButton aria-label="Comandi recenti"><svg width="26" height="14" viewBox="0 0 26 14" aria-hidden="true"><path d="M5 .500H18V13.500H5Z" fill="#d9dde0" stroke="#aaa" /><path d="M7 4L10 7L7 10M11 10H15" fill="none" stroke="#223" strokeWidth="1.400" /><path d="M21 5H26L23.500 8Z" fill="#888" /></svg></ToolButton>
              <CommandInput aria-label="Comando" placeholder="Digitare un comando" />
              <SiteLink href="#sito">www.autofemsoft.com</SiteLink>
            </CommandBar>
          </DocColumn>

          <Callout>
            <svg width="274" height="98" viewBox="0 0 274 98" aria-hidden="true">
              <defs>
                <linearGradient id="co" gradientUnits="userSpaceOnUse" x1="4" y1="0" x2="90" y2="0"><stop offset="0" stopColor="#ddd" stopOpacity=".25" /><stop offset=".5" stopColor="#e6e6e6" stopOpacity=".5" /><stop offset=".85" stopColor="#f2f2f2" stopOpacity=".95" /><stop offset="1" stopColor="#f7f7f7" /></linearGradient>
                <filter id="sh" x="-10%" y="-10%" width="120%" height="130%"><feDropShadow dx="3" dy="3" stdDeviation="2" floodColor="#000" floodOpacity=".5" /></filter>
              </defs>
              <path d="M4 48L62 4V19H264V74H62V89Z" fill="url(#co)" stroke="#8c8c8c" strokeWidth="1.200" filter="url(#sh)" />
            </svg>
            <CalloutText>Smussare la griglia sul<br />superficie curve</CalloutText>
          </Callout>
        </Work>

        <Status>
          <Coordinates>-325.1852, 86.8212 , 0.0000</Coordinates>
          {statusIcons.map(([name, on, icon]) => <StatusButton key={name} $on={on} aria-label={name}>{icon}</StatusButton>)}
          <Spacer />
          <ModelButton>MODELLO</ModelButton>
          <StatusButton aria-label="Layout"><Lines c={k} fill="#ddd" d="M3 1H13V11H3ZM5 3V9H11Z" sw={1}><path d="M1 13H15" stroke={k} /></Lines></StatusButton>
          <StatusButton aria-label="Viste"><Lines c={k} fill="#eee" d="M1 2H7V8H1ZM9 2H15V8H9ZM0 11H16" sw={1.2} /></StatusButton>
          <ScaleButton><Lines c="#f4f4f4" d={person} sw={1.6} />1:1</ScaleButton>
          <StatusButton aria-label="Visibilità"><Lines d={person}>{bolt}</Lines></StatusButton>
          <StatusButton aria-label="Scala automatica"><Lines c="#ccc" d={person} /></StatusButton>
          <StatusButton $gap aria-label="Area di lavoro"><svg width="16" height="16" viewBox="0 0 28 28" aria-hidden="true"><circle cx="14" cy="14" r="11" fill="none" stroke="#333" strokeWidth="5" strokeDasharray="4.300 4.300" /><circle cx="14" cy="14" r="9" fill="#eee" stroke="#333" strokeWidth="2" /><circle cx="14" cy="14" r="3.500" fill="#aaa" stroke="#333" strokeWidth="1.500" /></svg></StatusButton>
          <StatusButton aria-label="Blocca"><Lines c={k} fill="#f4f4f4" d="M2 6H9V13H2Z" sw={1.2}><path d="M9 6V3C9 0 14 0 14 3V6" fill="none" stroke={k} strokeWidth="1.500" /><path d="M5.500 8V11" stroke={k} /></Lines></StatusButton>
          <StatusButton aria-label="Accelerazione"><Lines c="#555" fill="#ddd" d="M1 2H12V7H1Z" sw={1}>{bolt}</Lines></StatusButton>
          <Tray>
            <StatusButton $flat aria-label="Standard CAD"><Lines c="#335" fill="#fff" d="M2 1H7L9 3V12H2Z" sw={1}><circle cx="10" cy="6" r="4" fill="#2c62b8" /><path d="M6 9L9 12L14 8" fill="none" stroke="#38b838" strokeWidth="2.500" /></Lines></StatusButton>
            <StatusButton $flat aria-label="Isola oggetti"><Lines c="#997" fill="#fff2a0" d="M8 1C13 1 13 6 10 9V13H6V9C3 6 3 1 8 1Z" sw={1}><path d="M6 10H10M6 12H10" stroke="#555" /></Lines></StatusButton>
          </Tray>
          <ToolButton aria-label="Menu barra di stato"><Caret c="#111" w={6} /></ToolButton>
          <StatusButton $flat aria-label="Schermo intero"><Lines c="#444" fill="#f4f4f4" d="M2 1H14V12H2Z" sw={1.2}><path d="M2 2H14" stroke="#555" strokeWidth="3" /></Lines></StatusButton>
          <svg width="16" height="20" viewBox="0 0 16 20" aria-hidden="true"><path d="M13 8V10M13 12V14M9 12V14M13 16V18M9 16V18M5 16V18" stroke="#ddd" strokeWidth="2" /></svg>
        </Status>
      </Stage>
    </>
  );
}
